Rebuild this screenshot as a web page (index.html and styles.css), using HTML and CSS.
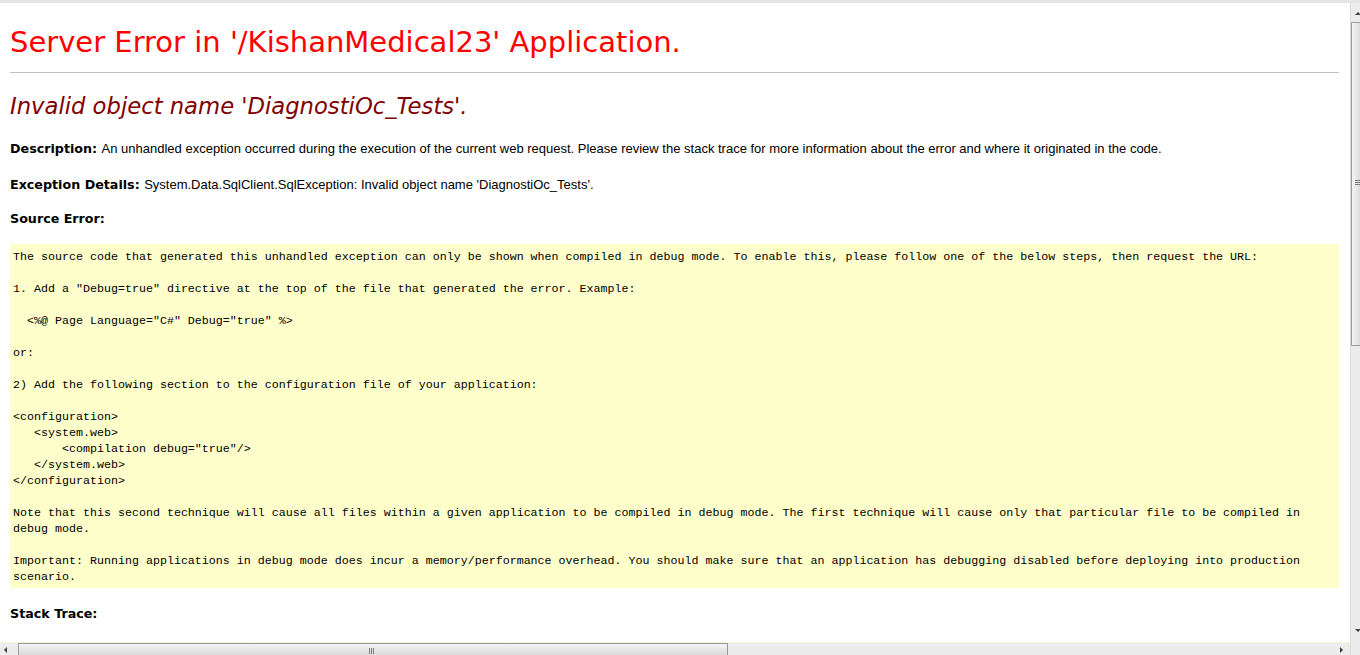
FILE: index.html
```html
<!DOCTYPE html>
<html>
<head>
<meta charset="utf-8">
<title>Invalid object name 'DiagnostiOc_Tests'.</title>
<link rel="stylesheet" href="styles.css">
</head>
<body>
<div class="page">
  <h1 class="title">Server Error in '/KishanMedical23' Application.</h1>
  <hr class="rule">
  <h2 class="subtitle"><i>Invalid object name 'DiagnostiOc_Tests'.</i></h2>
  <p class="line line-desc"><b class="label">Description: </b>An unhandled exception occurred during the execution of the current web request. Please review the stack trace for more information about the error and where it originated in the code.</p>
  <p class="line line-exc"><b class="label">Exception Details: </b>System.Data.SqlClient.SqlException: Invalid object name 'DiagnostiOc_Tests'.</p>
  <p class="line line-src"><b class="label">Source Error:</b></p>
  <div class="codebox"><pre class="code">The source code that generated this unhandled exception can only be shown when compiled in debug mode. To enable this, please follow one of the below steps, then request the URL:

1. Add a "Debug=true" directive at the top of the file that generated the error. Example:

  &lt;%@ Page Language="C#" Debug="true" %&gt;

or:

2) Add the following section to the configuration file of your application:

&lt;configuration&gt;
   &lt;system.web&gt;
       &lt;compilation debug="true"/&gt;
   &lt;/system.web&gt;
&lt;/configuration&gt;

Note that this second technique will cause all files within a given application to be compiled in debug mode. The first technique will cause only that particular file to be compiled in
debug mode.

Important: Running applications in debug mode does incur a memory/performance overhead. You should make sure that an application has debugging disabled before deploying into production
scenario.</pre></div>
  <p class="line line-stack"><b class="label">Stack Trace:</b></p>
</div>

<div class="vscroll">
  <div class="vs-up"><span class="tri tri-up"></span></div>
  <div class="vs-thumb"><span class="grip-h"></span></div>
  <div class="vs-track"></div>
  <div class="vs-down"><span class="tri tri-down"></span></div>
</div>
<div class="hscroll">
  <div class="hs-left"><span class="tri tri-left"></span></div>
  <div class="hs-thumb"><span class="grip-v"></span></div>
  <div class="hs-track"></div>
  <div class="hs-right"><span class="tri tri-right"></span></div>
</div>
<div class="corner"></div>
</body>
</html>
```
FILE: styles.css
```css
html, body {
  margin: 0;
  padding: 0;
  background: #ffffff;
}
body {
  width: 1360px;
  height: 655px;
  overflow: hidden;
  position: relative;
  border-top: 3px solid #e4e4e4;
  box-sizing: border-box;
  font-family: "DejaVu Sans", Verdana, sans-serif;
  color: #000;
}
.page {
  padding: 0 21px 0 10px;
}
.title {
  margin: 21px 0 0;
  font-family: "DejaVu Sans", Verdana, sans-serif;
  font-weight: normal;
  font-size: 29px;
  line-height: 36px;
  color: #ff0000;
  white-space: nowrap;
}
.rule {
  margin: 12px 0 0;
  border: 0;
  border-top: 1px solid #c0c0c0;
  height: 0;
}
.subtitle {
  margin: 19px 0 0;
  font-family: "DejaVu Sans", Verdana, sans-serif;
  font-weight: normal;
  font-size: 22.7px;
  line-height: 28px;
  color: #800000;
  white-space: nowrap;
}
.line {
  margin: 0;
  font-family: "Liberation Sans", Arial, sans-serif;
  font-size: 13px;
  line-height: 16px;
  color: #000;
  white-space: nowrap;
}
.label {
  font-family: "DejaVu Sans", Verdana, sans-serif;
  font-weight: bold;
  font-size: 12.7px;
}
.line-desc { margin-top: 21px; }
.line-exc { margin-top: 20px; }
.line-src { margin-top: 18px; }
.line-stack { margin-top: 18px; }
.codebox {
  margin-top: 17px;
  background: #ffffcc;
  padding: 5px 3px 3px 3px;
}
.code {
  margin: 0;
  font-family: "Liberation Mono", "Courier New", monospace;
  font-size: 11.67px;
  line-height: 16px;
  white-space: pre;
  color: #000;
}

/* scrollbars (window chrome overlay) */
.vscroll {
  position: absolute;
  top: 0;
  left: 1350px;
  width: 10px;
  height: 637px;
  background: #ececec;
  border-left: 1px solid #dcdcdc;
  display: flex;
  flex-direction: column;
}
.vs-up {
  height: 19px;
  position: relative;
}
.vs-thumb {
  height: 322px;
  background: linear-gradient(to right, #f4f4f4, #dadada);
  border: 1px solid #9a9a9a;
  border-right: 0;
  position: relative;
}
.vs-track { flex: 1; }
.vs-down {
  height: 18px;
  position: relative;
}
.hscroll {
  position: absolute;
  left: 0;
  top: 639px;
  width: 1350px;
  height: 16px;
  background: #ececec;
  border-top: 1px solid #f4f4d8;
  box-sizing: border-box;
  display: flex;
}
.hs-left {
  width: 18px;
  position: relative;
}
.hs-thumb {
  width: 710px;
  background: linear-gradient(to bottom, #f4f4f4, #d6d6d6);
  border: 1px solid #9a9a9a;
  box-sizing: border-box;
  position: relative;
}
.hs-track { flex: 1; }
.hs-right {
  width: 18px;
  position: relative;
}
.corner {
  position: absolute;
  left: 1350px;
  top: 637px;
  width: 10px;
  height: 18px;
  background: #ececec;
  border-left: 1px solid #dcdcdc;
}
.tri {
  position: absolute;
  width: 0;
  height: 0;
}
.tri-up {
  left: 4px;
  top: 9px;
  border-left: 3px solid transparent;
  border-right: 3px solid transparent;
  border-bottom: 3px solid #404040;
}
.tri-down {
  left: 4px;
  top: 7px;
  border-left: 3px solid transparent;
  border-right: 3px solid transparent;
  border-top: 3px solid #404040;
}
.tri-left {
  left: 4px;
  top: 4px;
  border-top: 3px solid transparent;
  border-bottom: 3px solid transparent;
  border-right: 3px solid #404040;
}
.tri-right {
  left: 8px;
  top: 4px;
  border-top: 3px solid transparent;
  border-bottom: 3px solid transparent;
  border-left: 3px solid #404040;
}
.grip-h {
  position: absolute;
  left: 3px;
  top: 157px;
  width: 7px;
  height: 5px;
  background: repeating-linear-gradient(to bottom, #7a7a7a 0 1px, transparent 1px 2px);
}
.grip-v {
  position: absolute;
  left: 350px;
  top: 4px;
  width: 6px;
  height: 6px;
  background: repeating-linear-gradient(to right, #7a7a7a 0 1px, transparent 1px 2px);
}
```
